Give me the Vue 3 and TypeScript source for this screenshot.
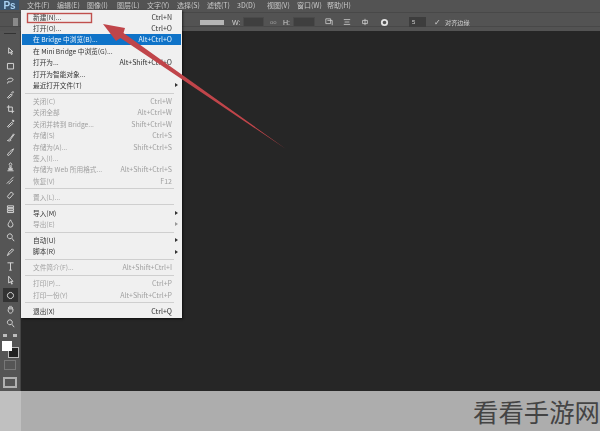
<script setup lang="ts">
type MenuRow = { label?: string; key?: string; off?: boolean; active?: boolean; more?: boolean; sep?: boolean }

const menuBar = ['文件(F)', '编辑(E)', '图像(I)', '图层(L)', '文字(Y)', '选择(S)', '滤镜(T)', '3D(D)', '视图(V)', '窗口(W)', '帮助(H)']

const rows: MenuRow[] = [
  { label: '新建(N)...', key: 'Ctrl+N' },
  { label: '打开(O)...', key: 'Ctrl+O' },
  { label: '在 Bridge 中浏览(B)...', key: 'Alt+Ctrl+O', active: true },
  { label: '在 Mini Bridge 中浏览(G)...' },
  { label: '打开为...', key: 'Alt+Shift+Ctrl+O' },
  { label: '打开为智能对象...' },
  { label: '最近打开文件(T)', more: true },
  { sep: true },
  { label: '关闭(C)', key: 'Ctrl+W', off: true },
  { label: '关闭全部', key: 'Alt+Ctrl+W', off: true },
  { label: '关闭并转到 Bridge...', key: 'Shift+Ctrl+W', off: true },
  { label: '存储(S)', key: 'Ctrl+S', off: true },
  { label: '存储为(A)...', key: 'Shift+Ctrl+S', off: true },
  { label: '签入(I)...', off: true },
  { label: '存储为 Web 所用格式...', key: 'Alt+Shift+Ctrl+S', off: true },
  { label: '恢复(V)', key: 'F12', off: true },
  { sep: true },
  { label: '置入(L)...', off: true },
  { sep: true },
  { label: '导入(M)', more: true },
  { label: '导出(E)', more: true, off: true },
  { sep: true },
  { label: '自动(U)', more: true },
  { label: '脚本(R)', more: true },
  { sep: true },
  { label: '文件简介(F)...', key: 'Alt+Shift+Ctrl+I', off: true },
  { sep: true },
  { label: '打印(P)...', key: 'Ctrl+P', off: true },
  { label: '打印一份(Y)', key: 'Alt+Shift+Ctrl+P', off: true },
  { sep: true },
  { label: '退出(X)', key: 'Ctrl+Q' },
]

// rough tool shapes, one per toolbar slot
const tools = [
  'M6 3v9l2.500-2 2 4 1.500-.8-2-3.700H13z',
  'M4 4h10v9H4z',
  'M4 8c0-3 8-4 9-1s-5 5-8 4l-1 3',
  'M4 14l6-6 2 2-6 5zM11 6l2-2 1 1-2 2z',
  'M6 2v10h9M3 5h9v10',
  'M4 14l7-7 2 2-7 6zM12 5l1-2 2 2-2 1z',
  'M4 14c2 0 2-2 4-3l2 2c-1 2-3 2-6 1zM9 10l5-7 1 1-5 7z',
  'M4 13c2-4 5-7 10-10-2 5-5 8-8 11z',
  'M6 14h6v-2H6zM8 11V7a2 2 0 1 1 2 0v4zM4 16h10',
  'M3 14l5-5M9 8l5-5M6 15l7-7',
  'M4 12l6-7 4 3-6 7H6z',
  'M4 3h10v3H4zM4 7h10v3H4zM4 11h10v3H4z',
  'M9 3c2 4 4 6 4 8a4 4 0 0 1-8 0c0-2 2-4 4-8z',
  'M8 3a4 4 0 1 1-.1 0zM11 10l4 5',
  'M4 14l2-5 6-6 2 2-6 6z',
  'M4 3h10M9 3v12M7 15h4',
  'M6 2v11l3-2 2 4 1-.5-2-4h3z',
  'M9 4a5 5 0 1 1-.1 0z',
  'M6 9V5M8 9V3M10 9V3M12 9V5M5 9c0 4 2 6 4 6s4-2 4-5V8',
  'M8 3a4 4 0 1 1-.1 0zM11 10l4 5',
]
</script>

<template>
  <div class="screen">
    <div class="app">
      <div class="menu-bar">
        <div class="ps-logo">Ps</div>
        <span v-for="item in menuBar" :key="item" class="menu-item">{{ item }}</span>
      </div>

      <div class="options-bar">
        <div class="home-box"></div>
        <div class="options-right">
          <div class="line-style"></div>
          <span class="opt-label">W:</span>
          <div class="opt-input"></div>
          <span class="opt-label link">oo</span>
          <span class="opt-label">H:</span>
          <div class="opt-input wide"></div>
          <svg class="opt-icon first" viewBox="0 0 10 10"><path d="M1 1h6v6H1zM3 3h6v6" /></svg>
          <svg class="opt-icon" viewBox="0 0 10 10"><path d="M1 2h8M2 5h6M1 8h8" /></svg>
          <svg class="opt-icon" viewBox="0 0 10 10"><path d="M5 1v8M2 3h6v4H2z" /></svg>
          <svg class="opt-icon gear" viewBox="0 0 10 10"><circle cx="5" cy="5" r="3" /></svg>
          <div class="size-input">5</div>
          <span class="check">✓</span>
          <span class="opt-text">对齐边缘</span>
        </div>
      </div>

      <div class="workspace">
        <div class="toolbar">
          <div class="tool-grip"></div>
          <div
            v-for="(d, i) in tools"
            :key="i"
            class="tool"
            :class="{ selected: i === 17 }"
          >
            <svg viewBox="0 0 18 18"><path :d="d" /></svg>
          </div>
          <div class="mini-swatches">
            <span></span><span></span>
          </div>
          <div class="colors">
            <div class="bg-color"></div>
            <div class="fg-color"></div>
          </div>
          <div class="mask-btn"></div>
          <div class="view-btn"></div>
        </div>
        <div class="canvas"></div>

        <div class="file-menu">
          <template v-for="(row, i) in rows" :key="i">
            <div v-if="row.sep" class="sep"></div>
            <div v-else class="row" :class="{ off: row.off, active: row.active }">
              <span class="label">{{ row.label }}</span>
              <span v-if="row.key">{{ row.key }}</span>
              <i v-if="row.more" class="more"></i>
            </div>
          </template>
        </div>
      </div>
    </div>

    <div class="footer">
      <div class="footer-side"></div>
      <div class="watermark">看看手游网</div>
    </div>

    <svg class="annotation" viewBox="0 0 600 431">
      <rect x="27.500" y="13.500" width="64" height="9" />
      <path class="arrow" d="M286 149 120.500 38 116 41 103 24 125 28 123.500 33z" />
    </svg>
  </div>
</template>

<style scoped>
.screen {
  position: relative;
  width: 600px;
  height: 431px;
  overflow: hidden;
  display: flex;
  flex-direction: column;
  font-family: "Noto Sans CJK SC", "Liberation Sans", sans-serif;
  background: #262626;
}

.app {
  height: 391px;
  display: flex;
  flex-direction: column;
}

.menu-bar {
  height: 12px;
  padding-bottom: 2px;
  box-sizing: border-box;
  flex: none;
  display: flex;
  align-items: center;
  background: #535353;
  color: #c8c8c8;
  font-size: 7px;
  filter: blur(0.5px);
}

.ps-logo {
  width: 19px;
  height: 10px;
  margin-right: 2px;
  flex: none;
  display: flex;
  align-items: center;
  justify-content: center;
  background: #3a556f;
  color: #a9d2f2;
  font: bold 10px "Liberation Sans", sans-serif;
}

.menu-item {
  width: 30px;
  flex: none;
  padding-left: 6px;
  box-sizing: border-box;
  white-space: nowrap;
}

.options-bar {
  height: 19px;
  flex: none;
  display: flex;
  align-items: center;
  background: linear-gradient(#535353 13px, #484848 13px, #484848 14px, #535353 14px);
  border-top: 1px solid #484848;
  box-sizing: border-box;
  filter: blur(0.5px);
}

.home-box {
  width: 5px;
  height: 8px;
  margin-left: 13px;
  background: #8a8a8a;
}

.options-right {
  margin-left: 182px;
  display: flex;
  align-items: center;
  height: 100%;
  color: #d0d0d0;
  font-size: 7px;
}

.line-style {
  width: 24px;
  height: 5px;
  background: #b5b5b5;
}

.opt-label {
  margin-left: 8px;
  width: 8px;
  font-family: "Liberation Sans", sans-serif;
}

.opt-label.link {
  width: 8px;
  margin-left: 6px;
  color: #9a9a9a;
  font-size: 6px;
}

.opt-label.link + .opt-label {
  margin-left: 5px;
  width: 7px;
}

.opt-input {
  width: 21px;
  height: 10px;
  margin-left: 3px;
  background: #3f3f3f;
  border: 1px solid #4a4a4a;
  box-sizing: border-box;
}

.opt-input.wide {
  width: 22px;
}

.opt-icon {
  width: 8px;
  height: 8px;
  margin-left: 10px;
  fill: none;
  stroke: #cfcfcf;
  stroke-width: 1;
}

.opt-icon.first {
  margin-left: 10px;
}

.opt-icon.gear {
  width: 9px;
  height: 9px;
  margin-left: 11px;
  stroke: #e2e2e2;
  stroke-width: 2;
}

.size-input {
  width: 17px;
  height: 10px;
  margin-left: 20px;
  padding-left: 3px;
  box-sizing: border-box;
  background: #3d3d3d;
  line-height: 10px;
  font-size: 6px;
  font-family: "Liberation Sans", sans-serif;
}

.check {
  width: 7px;
  margin-left: 8px;
  font-size: 8px;
  font-family: "DejaVu Sans", sans-serif;
}

.opt-text {
  margin-left: 4px;
  white-space: nowrap;
  font-size: 6.200px;
}

.workspace {
  position: relative;
  flex: 1;
  display: flex;
  min-height: 0;
}

.toolbar {
  width: 21px;
  flex: none;
  display: flex;
  flex-direction: column;
  align-items: center;
  background: #555;
  border-right: 1px solid #444;
  box-sizing: border-box;
  filter: blur(0.6px);
}

.tool-grip {
  width: 12px;
  height: 1px;
  margin-top: 2px;
  margin-bottom: 10.850px;
  background: #333;
}

.tool {
  width: 15px;
  height: 14.300px;
  flex: none;
  display: flex;
  align-items: center;
  justify-content: center;
}

.tool.selected {
  background: #333;
}

.tool svg {
  width: 11px;
  height: 11px;
  fill: none;
  stroke: #d4d4d4;
  stroke-width: 1.600;
}

.mini-swatches {
  width: 14px;
  display: flex;
  justify-content: space-between;
  margin-top: 3px;
}

.mini-swatches span {
  width: 4px;
  height: 3px;
  background: #bdbdbd;
}

.colors {
  position: relative;
  width: 17px;
  height: 16px;
  margin-top: 4px;
}

.fg-color {
  position: absolute;
  left: 0;
  top: 0;
  width: 10px;
  height: 10px;
  background: #fff;
}

.bg-color {
  position: absolute;
  left: 6px;
  top: 6px;
  width: 9px;
  height: 9px;
  background: #222;
  border: 1px solid #bbb;
}

.mask-btn {
  width: 10px;
  height: 8px;
  margin-top: 3px;
  border: 1px solid #777;
}

.view-btn {
  width: 10px;
  height: 7px;
  margin-top: 7px;
  border: 2px solid #b0b0b0;
}

.canvas {
  flex: 1;
  background: #262626;
}

.file-menu {
  position: absolute;
  left: 21px;
  top: -21px;
  width: 161px;
  height: 308px;
  padding: 1px 8px 0 2px;
  box-sizing: border-box;
  background: #f0f0f0;
  box-shadow: 1px 1px 2px rgba(0, 0, 0, 0.6);
  font-size: 7px;
  color: #333;
  filter: blur(0.5px);
}

.row {
  position: relative;
  height: 11.400px;
  display: flex;
  align-items: center;
  justify-content: space-between;
  margin: 0 -7px 0 -1px;
  padding: 0 9px 0 11px;
  white-space: nowrap;
}

.row .label {
  font-size: 6.700px;
}

.row.off {
  color: #a0a0a0;
}

.row.active {
  background: #0f73c8;
  color: #e6f1fa;
}

.more {
  position: absolute;
  right: 3px;
  top: 4px;
  border-left: 3px solid #333;
  border-top: 2px solid transparent;
  border-bottom: 2px solid transparent;
}

.off .more {
  border-left-color: #999;
}

.sep {
  height: 1px;
  margin: 1.800px 0 1.800px 2px;
  background: #cfcfcf;
}

.footer {
  height: 40px;
  flex: none;
  display: flex;
  background: #adadad;
}

.footer-side {
  width: 21px;
  background: #c0c0c0;
}

.watermark {
  flex: 1;
  text-align: right;
  line-height: 41px;
  font-size: 25.400px;
  white-space: nowrap;
  color: #444;
}

.annotation {
  position: absolute;
  inset: 0;
  width: 600px;
  height: 431px;
  pointer-events: none;
}

.annotation rect {
  fill: none;
  stroke: #c0504d;
  stroke-width: 1.400;
}

.annotation .arrow {
  fill: #c0454a;
}
</style>
